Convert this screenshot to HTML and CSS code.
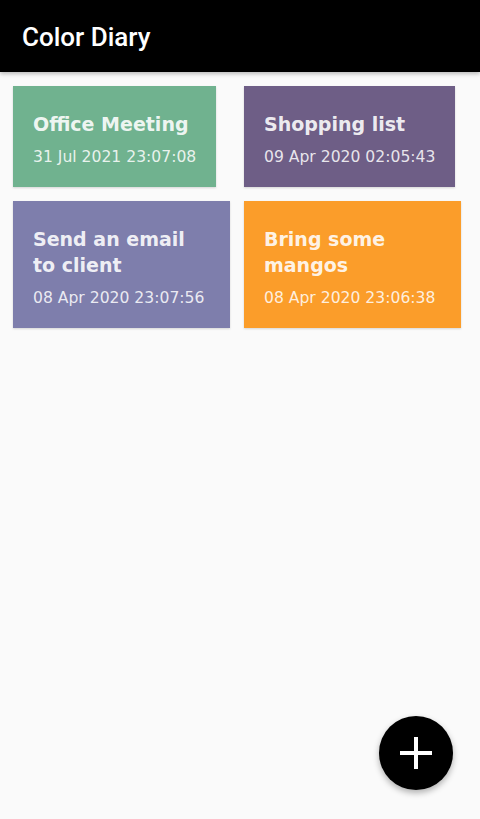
FILE: index.html
```html
<!DOCTYPE html>
<html lang="en">
<head>
    <meta charset="UTF-8">
    <meta name="viewport" content="width=device-width, initial-scale=1.0">
    <title>Color Diary</title>
    <link rel="stylesheet" href="styles.css">
</head>
<body>
    <div class="header">
        <span class="title">Color Diary</span>
    </div>

    <div class="notes">
        <div class="note green">
            <div class="note-title">Office Meeting</div>
            <div class="note-date">31 Jul 2021 23:07:08</div>
        </div>
        <div class="note purple">
            <div class="note-title">Shopping list</div>
            <div class="note-date">09 Apr 2020 02:05:43</div>
        </div>
        <div class="note lavender">
            <div class="note-title">Send an email to client</div>
            <div class="note-date">08 Apr 2020 23:07:56</div>
        </div>
        <div class="note orange">
            <div class="note-title">Bring some mangos</div>
            <div class="note-date">08 Apr 2020 23:06:38</div>
        </div>
    </div>

    <!-- Add note button -->
    <button class="fab" aria-label="Add note">
        <svg width="32" height="32" viewBox="0 0 32 32">
            <path d="M16 0 V32 M0 16 H32" stroke="#fff" stroke-width="4"/>
        </svg>
    </button>
</body>
</html>
```

FILE: styles.css
```css
/* Basic reset */
* {
    margin: 0;
    padding: 0;
    box-sizing: border-box;
}

body {
    font-family: "DejaVu Sans", sans-serif;
    background-color: #fafafa;
    min-height: 100vh;
    position: relative;
}

/* Top bar */
.header {
    background-color: #000;
    height: 72px;
    padding-left: 22px;
    display: flex;
    align-items: center;
    box-shadow: 0 2px 4px rgba(0, 0, 0, 0.25);
}

.header .title {
    font-family: Roboto, sans-serif;
    font-weight: 500;
    font-size: 26px;
    color: #fff;
    margin-top: 2px;
}

/* Notes grid */
.notes {
    display: grid;
    grid-template-columns: 217px 217px;
    column-gap: 14px;
    row-gap: 14px;
    padding: 14px 20px 0 13px;
    align-items: start;
}

.note {
    justify-self: start;
    padding: 25px 20px 20px 20px;
    box-shadow: 0 1px 2px rgba(0, 0, 0, 0.15);
}

.note-title {
    font-weight: bold;
    font-size: 19px;
    line-height: 26px;
    color: rgba(255, 255, 255, 0.9);
}

.note-date {
    font-size: 15.6px;
    line-height: 20px;
    margin-top: 10px;
    color: rgba(255, 255, 255, 0.85);
}

.green {
    background-color: #70b28f;
}

.purple {
    background-color: #6e5e86;
}

.lavender {
    background-color: #7e7eac;
}

.orange {
    background-color: #fb9d2a;
}

/* Floating add button */
.fab {
    position: absolute;
    right: 27px;
    bottom: 29px;
    width: 74px;
    height: 74px;
    border-radius: 50%;
    border: none;
    background-color: #000;
    display: flex;
    align-items: center;
    justify-content: center;
    box-shadow: 0 3px 6px rgba(0, 0, 0, 0.3);
    cursor: pointer;
}
```
